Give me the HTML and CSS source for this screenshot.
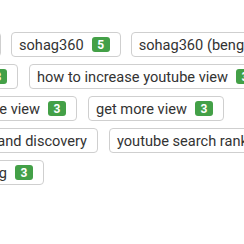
FILE: index.html
```html
<!DOCTYPE html>
<html>
<head>
<meta charset="utf-8">
<link rel="stylesheet" href="styles.css">
</head>
<body>
<div class="cloud">
  <div class="row r1">
    <div class="lead"><a class="tag">youtube <span class="badge">5</span></a></div>
    <a class="tag">sohag360 <span class="badge">5</span></a>
    <a class="tag">sohag360 (bengali) <span class="badge">5</span></a>
  </div>
  <div class="row r2">
    <div class="lead"><a class="tag">youtube seo <span class="badge">3</span></a></div>
    <a class="tag">how to increase youtube view <span class="badge">3</span></a>
  </div>
  <div class="row r3">
    <div class="lead"><a class="tag">youtube view <span class="badge">3</span></a></div>
    <a class="tag">get more view <span class="badge">3</span></a>
  </div>
  <div class="row r4">
    <div class="lead"><a class="tag">youtube seo and discovery</a></div>
    <a class="tag">youtube search ranking <span class="badge">3</span></a>
  </div>
  <div class="row r5">
    <div class="lead"><a class="tag">youtube marketing <span class="badge">3</span></a></div>
  </div>
</div>
</body>
</html>
```

FILE: styles.css
```css
html, body {
  margin: 0;
  padding: 0;
  background: #fff;
  overflow: hidden;
}
body {
  width: 244px;
  height: 244px;
  font-family: Roboto, "Liberation Sans", sans-serif;
}
.cloud {
  padding-top: 32px;
  display: flex;
  flex-direction: column;
  gap: 7px;
}
.row {
  display: flex;
  gap: 11px;
  white-space: nowrap;
}
.r1 { gap: 10px; }
.lead {
  flex: none;
  display: flex;
  justify-content: flex-end;
}
.r1 .lead { width: 1px; }
.r2 .lead { width: 18px; }
.r3 .lead { width: 77px; }
.r4 .lead { width: 98px; }
.r5 .lead { width: 44px; }
.tag {
  flex: none;
  box-sizing: border-box;
  height: 25px;
  display: inline-flex;
  align-items: center;
  padding: 0 10px 0 7px;
  border: 1px solid #cfcfcf;
  border-radius: 4px;
  color: #333;
  font-size: 14.6px;
  text-decoration: none;
}
.badge {
  margin-left: 8px;
  display: inline-flex;
  align-items: center;
  justify-content: center;
  min-width: 18px;
  height: 15px;
  box-sizing: border-box;
  padding: 0 5px;
  border-radius: 3px;
  background: #43a047;
  color: #fff;
  font-size: 12px;
  font-weight: 700;
}
```
